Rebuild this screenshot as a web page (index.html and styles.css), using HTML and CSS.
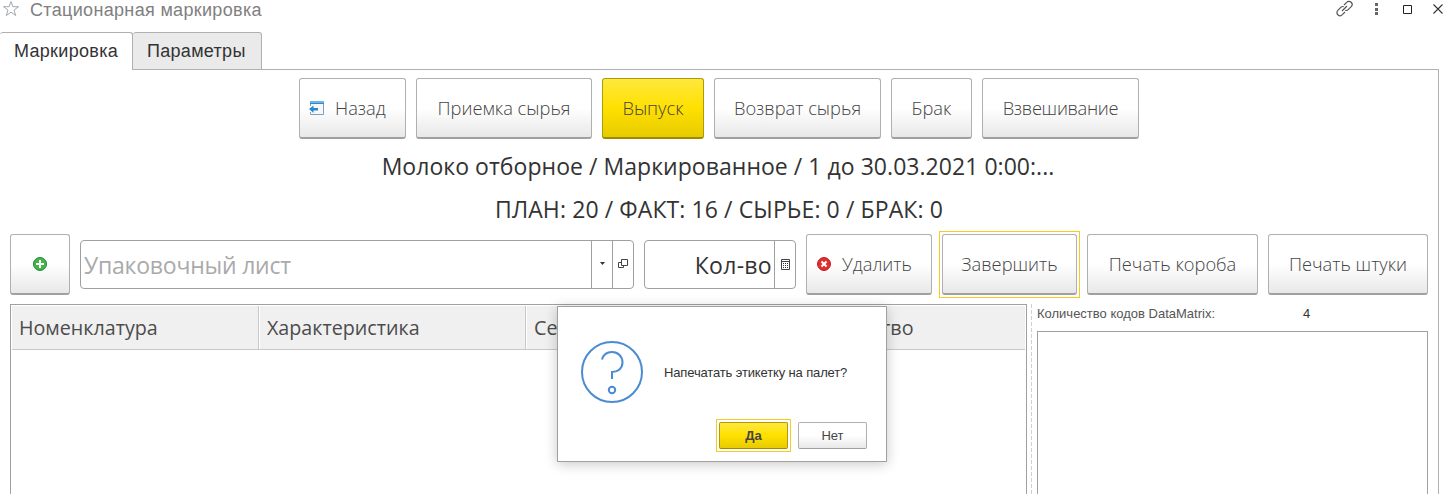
FILE: index.html
```html
<!DOCTYPE html>
<html lang="ru">
<head>
<meta charset="utf-8">
<title>Стационарная маркировка</title>
<link rel="stylesheet" href="styles.css">
</head>
<body>
<div class="window">
  <header class="titlebar">
    <svg class="star" width="18" height="18" viewBox="0 0 18 18"><path d="M9 1.500l1.900 5.200h5.600l-4.500 3.400 1.700 5.400L9 12.200l-4.700 3.300L6 10.100 1.500 6.700h5.600z" fill="none" stroke="#a3a8ad"/></svg>
    <h1 class="title">Стационарная маркировка</h1>
    <div class="tools">
      <svg width="18" height="18" viewBox="0 0 18 18" fill="none" stroke="#555" stroke-width="1.200"><path d="M8 5l2.700-2.700a2.700 2.700 0 0 1 4.500 4.300l-3 3a2.900 2.900 0 0 1-3 .7M9 12l-2.700 2.700a2.700 2.700 0 0 1-4.500-4.300l3-3a2.900 2.900 0 0 1 3-.7M6 11l5-5"/></svg>
      <svg width="18" height="18" viewBox="0 0 18 18" fill="#666"><path d="M8 3h3v3H8zM8 8h3v3H8zM8 12h3v3H8z"/></svg>
      <svg width="18" height="18" viewBox="0 0 18 18"><path d="M5.500 5.500h8v8h-8z" fill="none" stroke="#222"/></svg>
      <svg width="18" height="18" viewBox="0 0 18 18"><path d="M4.500 4.500l9 9M13.500 4.500l-9 9" fill="none" stroke="#333" stroke-width="1.100"/></svg>
    </div>
  </header>

  <nav class="tabs">
    <div class="tab active">Маркировка</div>
    <div class="tab">Параметры</div>
    <div class="tab-line"></div>
  </nav>

  <main class="panel">
    <div class="modes">
      <button class="btn w-back with-icon">
        <svg width="16" height="16" viewBox="0 0 16 16"><path d="M1.500 1.500h13v13h-13z" fill="#f8f8f8" stroke="#7fa0bd"/><path d="M1 1h14v3H1z" fill="#3b85c4"/><path d="M1 1h14v2H1z" fill="#67b6ef"/><path d="M0 6h5v6H0z" fill="#fff"/><path d="M0 9l4.500-3.500V8H9v2.500H4.500V13z" fill="#2589cf"/></svg>
        <span>Назад</span>
      </button>
      <button class="btn w-intake"><span>Приемка сырья</span></button>
      <button class="btn w-output primary"><span>Выпуск</span></button>
      <button class="btn w-return"><span>Возврат сырья</span></button>
      <button class="btn w-reject"><span>Брак</span></button>
      <button class="btn w-weigh"><span>Взвешивание</span></button>
    </div>
    <div class="summary product"><span>Молоко отборное / Маркированное / 1 до 30.03.2021 0:00:...</span></div>
    <div class="summary totals"><span>ПЛАН: 20 / ФАКТ: 16 / СЫРЬЕ: 0 / БРАК: 0</span></div>

    <div class="commands">
      <button class="btn w-add" aria-label="Добавить"><svg width="16" height="16" viewBox="0 0 16 16"><circle cx="8" cy="8" r="6.500" fill="#42b649" stroke="#20883a"/><path d="M8 4v8M4 8h8" stroke="#fff" stroke-width="2"/></svg></button>
      <div class="field list-field">
        <div class="placeholder"><span>Упаковочный лист</span></div>
        <div class="cell"><svg width="7" height="4" viewBox="0 0 7 4"><path d="M1 0h5L3.500 3z" fill="#333"/></svg></div>
        <div class="cell"><svg width="10" height="10" viewBox="0 0 10 10" fill="none" stroke="#444"><path d="M3.500.5h6v6h-6zM3 3.500H.5v5h5V7"/></svg></div>
      </div>
      <div class="field count-field">
        <div class="value"><span>Кол-во</span></div>
        <div class="cell"><svg width="9" height="11" viewBox="0 0 9 11"><path d="M.5.500h8v10h-8zM1 2.500h7" fill="none" stroke="#444"/><path d="M2 4h1v1H2zM4 4h1v1H4zM6 4h1v1H6zM2 6h1v1H2zM4 6h1v1H4zM6 6h1v1H6zM2 8h1v1H2zM4 8h1v1H4zM6 8h1v1H6z" fill="#333"/></svg></div>
      </div>
      <button class="btn w-delete with-icon"><svg width="16" height="16" viewBox="0 0 16 16"><circle cx="8" cy="8" r="6.500" fill="#df2f32" stroke="#bd1d22"/><path d="M5.500 5.500l5 5M10.500 5.500l-5 5" stroke="#fff" stroke-width="2"/></svg><span>Удалить</span></button>
      <button class="btn w-finish focused"><span>Завершить</span></button>
      <button class="btn w-box"><span>Печать короба</span></button>
      <button class="btn w-piece"><span>Печать штуки</span></button>
    </div>

    <div class="content">
      <div class="table">
        <div class="thead">
          <div class="th">Номенклатура</div>
          <div class="th">Характеристика</div>
          <div class="th">Серия</div>
          <div class="th">Количество</div>
        </div>
      </div>
      <div class="splitter"></div>
      <aside class="codes">
        <div class="codes-head"><span class="codes-label">Количество кодов DataMatrix:</span><span>4</span></div>
        <div class="codes-box"></div>
      </aside>
    </div>
  </main>

  <div class="dialog" role="dialog">
    <div class="message">
      <svg width="64" height="64" viewBox="0 0 64 64" fill="none" stroke="#4a8bd3" stroke-width="2"><circle cx="32" cy="32" r="30"/><path d="M22 19.500C23.500 14 27.500 12 32 12c6 0 10.500 4.500 10.500 10.300C42.500 28.500 38 32 32 32v7"/><circle cx="32" cy="50" r="3.200"/></svg>
      <span>Напечатать этикетку на палет?</span>
    </div>
    <div class="answers">
      <button class="btn small primary focused"><span>Да</span></button>
      <button class="btn small"><span>Нет</span></button>
    </div>
  </div>
</div>
</body>
</html>
```
FILE: styles.css
```css
* { box-sizing: border-box; }
body { margin: 0; background: #fff; font-family: "Liberation Sans", Arial, sans-serif; color: #333; }
.window { position: relative; width: 1453px; height: 494px; overflow: hidden; display: flex; flex-direction: column; }
svg { display: block; flex: none; }

.titlebar { height: 32px; display: flex; align-items: flex-start; padding-left: 2px; }
.star { margin-right: 10px; }
.title { margin: 0; font-size: 18px; line-height: 20px; font-weight: 400; color: #808080; letter-spacing: .33px; flex: 1; white-space: nowrap; }
.tools { display: flex; gap: 13px; padding-right: 6px; }

.tabs { height: 38px; display: flex; font-size: 18px; flex: none; }
.tab { height: 38px; line-height: 36px; padding-left: 14px; border: 1px solid #b0b0b0; border-radius: 3px 3px 0 0; width: 129px; background: #eaeaea; border-left: 0; letter-spacing: .3px; white-space: nowrap; }
.tab.active { width: 133px; background: #fff; border-bottom: 0; }
.tab-line { flex: 1; margin-right: 14px; border-bottom: 1px solid #b0b0b0; }

.panel { width: 1439px; flex: 1; border-right: 1px solid #b0b0b0; padding: 8px 10px 0; display: flex; flex-direction: column; }
.modes { display: flex; gap: 10px; justify-content: center; height: 61px; flex: none; }
.btn { position: relative; height: 61px; padding: 0; flex: none; display: flex; align-items: center; justify-content: center; border: 1px solid #b0b0b0; border-bottom: 2px solid #a0a0a0; border-radius: 3px; background: linear-gradient(#fff 50%, #e8e8e8); color: #444; font: 350 18.300px/26px "Open Sans", "Noto Sans", sans-serif; white-space: nowrap; }
.btn.primary { background: linear-gradient(#ffe83d, #ffe000 50%, #e8cb00); border-color: #ad9b0c; border-bottom-color: #9d8c00; }
.btn.focused::before { content: ""; position: absolute; inset: -4px -4px -5px; border: 1px solid #f5cb20; }
.with-icon { justify-content: flex-start; padding-left: 9px; gap: 10px; }
.w-back { width: 107px; }
.w-intake { width: 176px; }
.w-output { width: 102px; }
.w-return { width: 167px; }
.w-reject { width: 81px; }
.w-weigh { width: 157px; letter-spacing: -.3px; }
.w-add { width: 60px; }
.w-delete { width: 126px; }
.w-finish { width: 135px; }
.w-box { width: 171px; }
.w-piece { width: 160px; }

.summary { text-align: center; font: 400 23px/30px "Open Sans", "Noto Sans", sans-serif; white-space: nowrap; flex: none; }
.product { margin-top: 12px; letter-spacing: .04px; padding-right: 2px; }
.totals { margin-top: 13px; letter-spacing: .1px; }

.commands { display: flex; align-items: center; gap: 10px; height: 61px; margin-top: 10px; flex: none; }
.field { display: flex; flex: none; height: 49px; margin-bottom: 1px; border: 1px solid #a0a0a0; border-radius: 4px; font: 400 23px/48px "Open Sans", "Noto Sans", sans-serif; white-space: nowrap; }
.list-field { width: 554px; }
.count-field { width: 152px; }
.placeholder { flex: 1; padding-left: 3px; color: #aaa; letter-spacing: -.22px; }
.value { flex: 1; padding-right: 2px; text-align: right; letter-spacing: .3px; }
.cell { width: 21px; border-left: 1px solid #a0a0a0; display: flex; align-items: center; justify-content: center; }

.content { flex: 1; display: flex; margin-top: 9px; min-height: 0; }
.table { width: 1017px; border: 1px solid #a0a0a0; border-bottom: 0; padding: 1px; }
.thead { height: 44px; display: grid; grid-template-columns: 247px 267px 267px 1fr; background: #f0f0f0; border-bottom: 1px solid #c8c8c8; }
.th { padding-left: 7px; font: 400 19.700px/43px "Open Sans", "Noto Sans", sans-serif; color: #4c4c4c; border-right: 1px solid #c8c8c8; overflow: hidden; white-space: nowrap; }
.th + .th { border-left: 1px solid #fff; }
.th:last-child { border-right: 0; }
.splitter { width: 1px; margin-left: 4px; background: repeating-linear-gradient(#d0d0d0 0 4px, #fff 4px 6px); }
.codes { flex: 1; margin-left: 5px; display: flex; flex-direction: column; }
.codes-head { height: 27px; line-height: 19px; font-size: 13px; display: flex; }
.codes-label { width: 266px; color: #555; }
.codes-box { flex: 1; border: 1px solid #a0a0a0; border-bottom: 0; }

.dialog { position: absolute; left: 557px; top: 306px; width: 330px; height: 156px; background: #fff; border: 1px solid #a0a0a0; box-shadow: 0 2px 12px rgba(0,0,0,.22); }
.message { display: flex; align-items: center; gap: 20px; padding: 33px 0 0 22px; font-size: 13px; letter-spacing: -.14px; }
.answers { display: flex; justify-content: flex-end; gap: 10px; padding: 18px 19px 0 0; }
.btn.small { width: 69px; height: 27px; font: 400 13px/20px "Liberation Sans", Arial, sans-serif; border-radius: 2px; border-bottom-width: 1px; }
.btn.small.primary { font-weight: 700; }
.btn.small::before { bottom: -4px; }
```
